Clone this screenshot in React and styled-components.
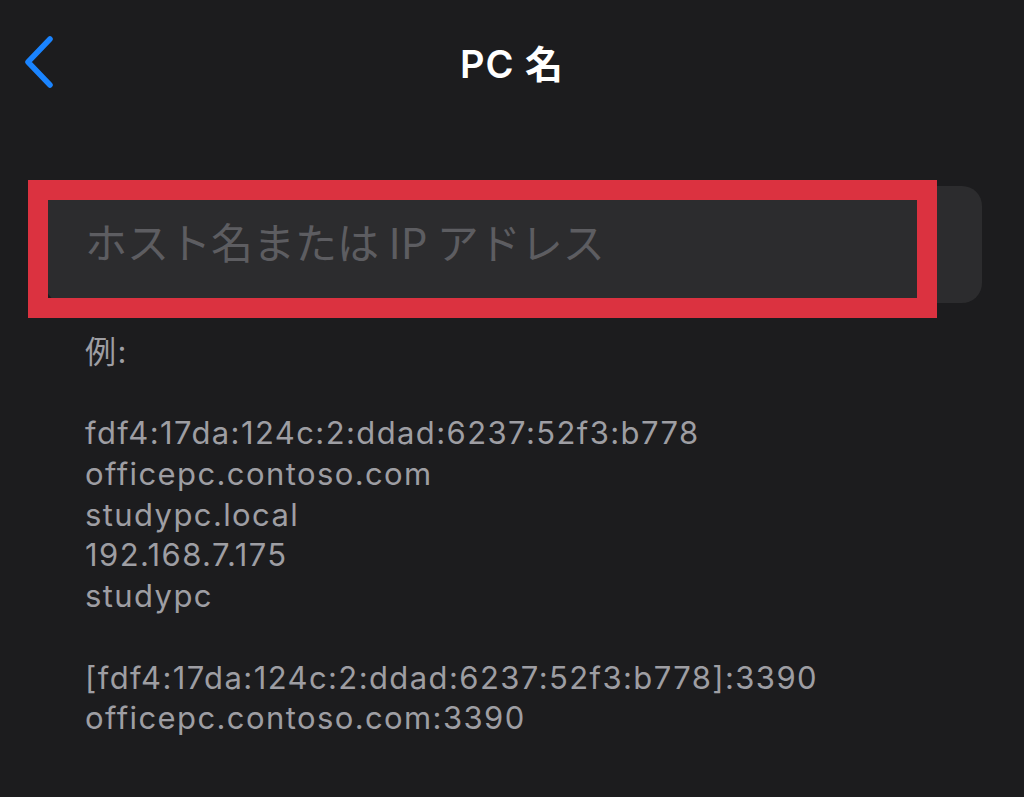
import React from 'react';
import styled, { createGlobalStyle } from 'styled-components';

const Global = createGlobalStyle`
  html, body {
    margin: 0;
    padding: 0;
    background: #1c1c1e;
  }
  body {
    font-family: Inter, "Noto Sans CJK JP", sans-serif;
  }
`

const Sheet = styled.div`
  width: 1024px;
  height: 797px;
  background: #1c1c1e;
  overflow: hidden;
  box-sizing: border-box;
`

const NavBar = styled.div`
  position: relative;
  height: 125px;
  display: flex;
  align-items: center;
  justify-content: center;
`

const BackBtn = styled.button`
  position: absolute;
  left: 20px;
  top: 32px;
  width: 40px;
  height: 56px;
  padding: 0;
  border: none;
  background: none;
  display: flex;
  align-items: center;
  justify-content: center;
`

const Title = styled.h1`
  margin: 0;
  margin-top: -2px;
  color: #fff;
  font-size: 38px;
  font-weight: 600;
  font-family: Inter, "Noto Sans CJK JP", sans-serif;
  letter-spacing: 1px;
`

const FieldArea = styled.div`
  position: relative;
  margin: 61px 42px 0 45px;
`

const Field = styled.div`
  height: 117px;
  border-radius: 20px;
  background: #2c2c2e;
  display: flex;
  align-items: center;
  padding-left: 40px;
`

const Placeholder = styled.span`
  color: #5d5d61;
  font-size: 42px;
  font-family: "Noto Sans CJK JP", sans-serif;
  font-weight: 400;
  margin-top: -8px;
`

const Highlight = styled.div`
  position: absolute;
  left: -17px;
  top: -6px;
  width: 909px;
  height: 138px;
  box-sizing: border-box;
  border: 20px solid #db3240;
  pointer-events: none;
`

const Examples = styled.div`
  margin-top: 29px;
  padding-left: 85px;
  color: #9e9ea3;
  font-size: 31px;
  line-height: 40.7px;
  letter-spacing: 1.4px;
  font-family: Inter, "Noto Sans CJK JP", sans-serif;
`

const Line = styled.div`
  height: 40.7px;
  white-space: nowrap;
`

const lines = [
  '例:',
  '',
  'fdf4:17da:124c:2:ddad:6237:52f3:b778',
  'officepc.contoso.com',
  'studypc.local',
  '192.168.7.175',
  'studypc',
  '',
  '[fdf4:17da:124c:2:ddad:6237:52f3:b778]:3390',
  'officepc.contoso.com:3390',
];

export default function App() {
  return (
    <Sheet>
      <Global />
      <NavBar>
        <BackBtn aria-label="戻る">
          <svg width="40" height="56" viewBox="0 0 40 56">
            <path d="M30 7 L8 30 L30 53" fill="none" stroke="#1a84ff" strokeWidth="5.5" strokeLinecap="round" strokeLinejoin="round" />
          </svg>
        </BackBtn>
        <Title>PC 名</Title>
      </NavBar>
      <FieldArea>
        <Field>
          <Placeholder>ホスト名または IP アドレス</Placeholder>
        </Field>
        <Highlight />
      </FieldArea>
      <Examples>
        {lines.map((t, i) => (
          <Line key={i}>{t}</Line>
        ))}
      </Examples>
    </Sheet>
  );
}
